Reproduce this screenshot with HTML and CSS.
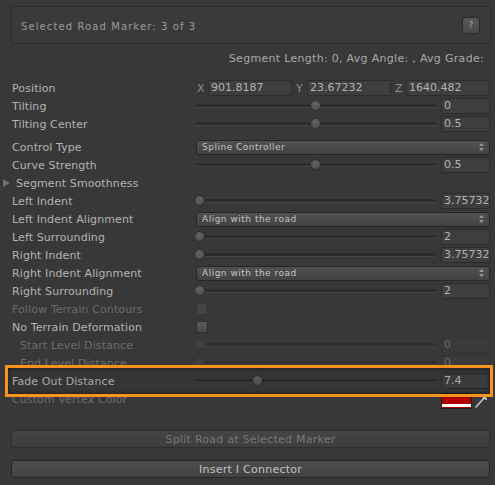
FILE: index.html
```html
<!DOCTYPE html>
<html>
<head>
<meta charset="utf-8">
<link rel="stylesheet" href="styles.css">
</head>
<body>
<div class="inspector">
  <div class="header">
    <span class="header-title">Selected Road Marker: 3 of 3</span>
    <span class="help-btn">?</span>
  </div>
  <div class="stats">Segment Length: 0, Avg Angle: , Avg Grade:</div>

  <div class="rows">
    <div class="row">
      <div class="label">Position</div>
      <div class="control vec3">
        <div class="axis"><span class="axis-name">X</span><span class="field">901.8187</span></div>
        <div class="axis"><span class="axis-name">Y</span><span class="field">23.67232</span></div>
        <div class="axis"><span class="axis-name">Z</span><span class="field">1640.482</span></div>
      </div>
    </div>
    <div class="row">
      <div class="label">Tilting</div>
      <div class="control"><div class="slider"><div class="track"></div><div class="rail"><div class="thumb" style="left:50%"></div></div></div><span class="field num">0</span></div>
    </div>
    <div class="row">
      <div class="label">Tilting Center</div>
      <div class="control"><div class="slider"><div class="track"></div><div class="rail"><div class="thumb" style="left:50%"></div></div></div><span class="field num">0.5</span></div>
    </div>
    <div class="row gap-top">
      <div class="label">Control Type</div>
      <div class="control"><div class="dropdown"><span>Spline Controller</span><svg class="updown" width="5" height="8" viewBox="0 0 5 8"><path d="M2.5 0 L5 3 L0 3 Z M0 5 L5 5 L2.5 8 Z" fill="#9a9a9a"/></svg></div></div>
    </div>
    <div class="row">
      <div class="label">Curve Strength</div>
      <div class="control"><div class="slider"><div class="track"></div><div class="rail"><div class="thumb" style="left:50%"></div></div></div><span class="field num">0.5</span></div>
    </div>
    <div class="row">
      <div class="label foldout"><svg class="fold-arrow" width="7" height="8" viewBox="0 0 7 8"><path d="M0 0 L7 4 L0 8 Z" fill="#6e6e6e"/></svg>Segment Smoothness</div>
    </div>
    <div class="row">
      <div class="label">Left Indent</div>
      <div class="control"><div class="slider"><div class="track"></div><div class="rail"><div class="thumb" style="left:0%"></div></div></div><span class="field num">3.75732</span></div>
    </div>
    <div class="row">
      <div class="label">Left Indent Alignment</div>
      <div class="control"><div class="dropdown"><span>Align with the road</span><svg class="updown" width="5" height="8" viewBox="0 0 5 8"><path d="M2.5 0 L5 3 L0 3 Z M0 5 L5 5 L2.5 8 Z" fill="#9a9a9a"/></svg></div></div>
    </div>
    <div class="row">
      <div class="label">Left Surrounding</div>
      <div class="control"><div class="slider"><div class="track"></div><div class="rail"><div class="thumb" style="left:0%"></div></div></div><span class="field num">2</span></div>
    </div>
    <div class="row">
      <div class="label">Right Indent</div>
      <div class="control"><div class="slider"><div class="track"></div><div class="rail"><div class="thumb" style="left:0%"></div></div></div><span class="field num">3.75732</span></div>
    </div>
    <div class="row">
      <div class="label">Right Indent Alignment</div>
      <div class="control"><div class="dropdown"><span>Align with the road</span><svg class="updown" width="5" height="8" viewBox="0 0 5 8"><path d="M2.5 0 L5 3 L0 3 Z M0 5 L5 5 L2.5 8 Z" fill="#9a9a9a"/></svg></div></div>
    </div>
    <div class="row">
      <div class="label">Right Surrounding</div>
      <div class="control"><div class="slider"><div class="track"></div><div class="rail"><div class="thumb" style="left:0%"></div></div></div><span class="field num">2</span></div>
    </div>
    <div class="row disabled">
      <div class="label">Follow Terrain Contours</div>
      <div class="control"><span class="checkbox"></span></div>
    </div>
    <div class="row">
      <div class="label">No Terrain Deformation</div>
      <div class="control"><span class="checkbox"></span></div>
    </div>
    <div class="row disabled">
      <div class="label indent">Start Level Distance</div>
      <div class="control"><div class="slider"><div class="track"></div><div class="rail"><div class="thumb" style="left:0%"></div></div></div><span class="field num">0</span></div>
    </div>
    <div class="row disabled">
      <div class="label indent">End Level Distance</div>
      <div class="control"><div class="slider"><div class="track"></div><div class="rail"><div class="thumb" style="left:0%"></div></div></div><span class="field num">0</span></div>
    </div>
    <div class="row">
      <div class="label">Fade Out Distance</div>
      <div class="control"><div class="slider"><div class="track"></div><div class="rail"><div class="thumb" style="left:25%"></div></div></div><span class="field num">7.4</span></div>
    </div>
    <div class="row disabled">
      <div class="label">Custom Vertex Color</div>
      <div class="control color-ctrl">
        <span class="swatch"></span>
        <svg class="picker" width="12" height="13" viewBox="0 0 12 13"><path d="M1 12 L9 3" stroke="#c8c8c8" stroke-width="1.6" stroke-linecap="round"/><path d="M8.5 1.5 L11 4" stroke="#c8c8c8" stroke-width="2" stroke-linecap="round"/></svg>
      </div>
    </div>
  </div>

  <div class="buttons">
    <div class="btn disabled-btn">Split Road at Selected Marker</div>
    <div class="btn">Insert I Connector</div>
  </div>
</div>
<div class="highlight"></div>
</body>
</html>
```

FILE: styles.css
```css
html, body {
  margin: 0;
  padding: 0;
  background: #383838;
}
body {
  width: 495px;
  height: 485px;
  overflow: hidden;
  position: relative;
  font-family: "DejaVu Sans", Verdana, sans-serif;
  font-size: 11px;
  color: #b4b4b4;
}
.inspector {
  display: flex;
  flex-direction: column;
}
.header {
  margin: 6px 4px 0 11px;
  height: 36px;
  border: 1px solid #2a2a2a;
  border-radius: 3px;
  background: #3a3a3a;
  display: flex;
  align-items: center;
  justify-content: space-between;
  padding: 0 10px 0 9px;
}
.header-title {
  font-size: 10px;
  letter-spacing: 1.1px;
  color: #9a9a9a;
  padding-top: 2px;
}
.help-btn {
  width: 16px;
  height: 15px;
  border: 1px solid #2a2a2a;
  border-radius: 3px;
  background: linear-gradient(#575757, #4a4a4a);
  color: #a8a8a8;
  font-size: 9px;
  display: flex;
  align-items: center;
  justify-content: center;
}
.stats {
  text-align: right;
  padding-right: 11px;
  margin-top: 8px;
  height: 14px;
  line-height: 14px;
  color: #a8a8a8;
  letter-spacing: 0.3px;
}
.rows {
  margin-top: 13px;
  display: flex;
  flex-direction: column;
}
.row {
  display: flex;
  align-items: center;
  height: 18px;
  padding: 0 5px 0 12px;
}
.gap-top {
  margin-top: 5px;
}
.label {
  width: 184px;
  flex: none;
  white-space: nowrap;
  color: #b4b4b4;
  letter-spacing: 0.1px;
}
.label.indent {
  padding-left: 8px;
  width: 176px;
}
.foldout {
  position: relative;
  left: -9px;
  display: flex;
  align-items: center;
  gap: 6px;
}
.fold-arrow {
  flex: none;
}
.disabled .label {
  color: #6c6c6c;
}
.control {
  flex: 1;
  display: flex;
  align-items: center;
  min-width: 0;
}
.vec3 {
  display: grid;
  grid-template-columns: 1fr 1fr 1fr;
  gap: 3px;
}
.axis {
  display: flex;
  align-items: center;
  min-width: 0;
}
.axis-name {
  width: 11px;
  flex: none;
  color: #8e8e8e;
  padding-left: 1px;
}
.field {
  box-sizing: border-box;
  height: 16px;
  line-height: 14px;
  border: 1px solid #2c2c2c;
  border-radius: 2px;
  background: #3e3e3e;
  padding-left: 2px;
  color: #b4b4b4;
  overflow: hidden;
  white-space: nowrap;
  flex: 1;
  min-width: 0;
}
.num {
  flex: none;
  width: 49px;
  margin-left: 5px;
  height: 16px;
}
.disabled .field {
  color: #6a6a6a;
  border-color: #333;
  background: #3a3a3a;
}
.slider {
  position: relative;
  width: 240px;
  height: 12px;
  flex: none;
}
.track {
  position: absolute;
  left: 0;
  right: 0;
  top: 4px;
  height: 3px;
  border-radius: 2px;
  background: #2c2c2c;
  box-shadow: 0 1px 0 #454545;
}
.rail {
  position: absolute;
  left: 3px;
  right: 5px;
  top: 0;
  bottom: 0;
}
.thumb {
  position: absolute;
  top: 0;
  width: 11px;
  height: 11px;
  margin-left: -5px;
  border-radius: 50%;
  background: radial-gradient(circle at 50% 35%, #626262, #4c4c4c);
  border: 1px solid #2e2e2e;
  box-sizing: border-box;
}
.disabled .thumb {
  background: #414141;
  border-color: #353535;
}
.disabled .track {
  background: #303030;
  box-shadow: 0 1px 0 #3f3f3f;
}
.dropdown {
  flex: 1;
  box-sizing: border-box;
  height: 15px;
  border: 1px solid #262626;
  border-radius: 3px;
  background: linear-gradient(#505050, #434343);
  display: flex;
  align-items: center;
  justify-content: space-between;
  padding: 0 5px 0 5px;
  font-size: 9px;
  letter-spacing: 0.5px;
  color: #c4c4c4;
}
.updown {
  flex: none;
}
.checkbox {
  width: 12px;
  height: 12px;
  box-sizing: border-box;
  border: 1px solid #2e2e2e;
  border-radius: 2px;
  background: linear-gradient(#5a5a5a, #4a4a4a);
}
.disabled .checkbox {
  background: #444;
  border-color: #353535;
}
.color-ctrl {
  justify-content: flex-end;
  padding-right: 3px;
  gap: 3px;
}
.swatch {
  width: 31px;
  height: 16px;
  box-sizing: border-box;
  border: 1px solid #1e1e1e;
  background: linear-gradient(#b00000 0 70%, #ffffff 70% 90%, #b00000 90%);
  margin-top: 3px;
}
.picker {
  margin-top: 4px;
}
.buttons {
  display: flex;
  flex-direction: column;
  gap: 12px;
  margin: 22px 5px 0 11px;
}
.btn {
  height: 18px;
  box-sizing: border-box;
  border: 1px solid #262626;
  border-radius: 3px;
  background: linear-gradient(#4d4d4d, #424242);
  display: flex;
  align-items: center;
  justify-content: center;
  color: #c2c2c2;
  letter-spacing: 0.25px;
}
.disabled-btn {
  color: #787878;
  background: linear-gradient(#454545, #3e3e3e);
  border-color: #2c2c2c;
}
.highlight {
  position: absolute;
  left: 5px;
  top: 365px;
  width: 488px;
  height: 32px;
  box-sizing: border-box;
  border: 3px solid #f7931e;
  background: rgba(0, 0, 0, 0.05);
  box-shadow: inset 0 0 4px rgba(0, 0, 0, 0.6);
}
```
